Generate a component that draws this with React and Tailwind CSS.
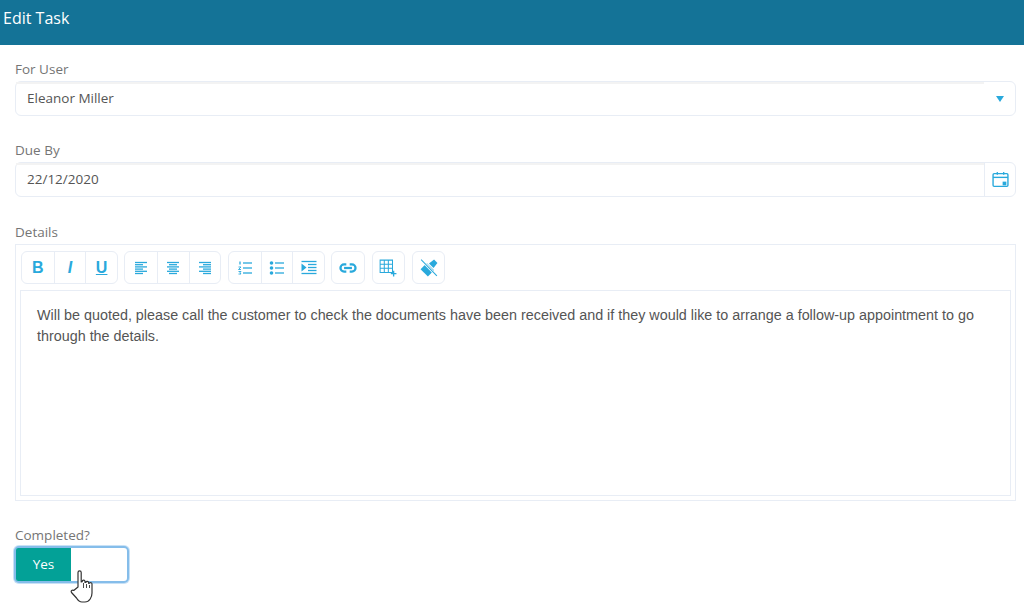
import React from 'react';

const ICON = '#29a9dc';

function Icon({ children, size = 16 }) {
  return (
    <svg width={size} height={size} viewBox="0 0 16 16" fill="none" stroke={ICON} strokeWidth="1.3">
      {children}
    </svg>
  );
}

function Lines({ rows }) {
  return (
    <Icon>
      {rows.map(([x1, x2], i) => (
        <line key={i} x1={x1} x2={x2} y1={2.5 + i * 2.2} y2={2.5 + i * 2.2} />
      ))}
    </Icon>
  );
}

const alignLeft = [[2, 14], [2, 10], [2, 14], [2, 10], [2, 14], [2, 10]];
const alignCenter = [[2, 14], [4, 12], [2, 14], [4, 12], [2, 14], [4, 12]];
const alignRight = [[2, 14], [6, 14], [2, 14], [6, 14], [2, 14], [6, 14]];

function ToolButton({ children, divider }) {
  return (
    <div className={`flex h-[31px] w-[31.670px] items-center justify-center ${divider ? 'border-l border-[#e8edf5]' : ''}`}>
      {children}
    </div>
  );
}

function ToolGroup({ items }) {
  return (
    <div className="flex rounded-md border border-[#e8edf5] bg-white">
      {items.map((item, i) => (
        <ToolButton key={i} divider={i > 0}>{item}</ToolButton>
      ))}
    </div>
  );
}

function Glyph({ className, children }) {
  return <span className={`text-[16px] leading-none text-[#29a9dc] ${className}`}>{children}</span>;
}

function Label({ children }) {
  return <label className="block h-[21px] text-[13.500px] leading-[20px] text-[#757575]">{children}</label>;
}

function Field({ children, side }) {
  return (
    <div className="mt-[1px] flex h-[35px] rounded-md border border-[#e8edf5] text-[13.500px] text-[#555]">
      <div className="flex flex-1 items-center border-t-2 border-[#f3f3f3] pb-[2px] pl-[11px]">{children}</div>
      {side}
    </div>
  );
}

export default function App() {
  return (
    <div className="relative h-[606px] w-[1024px] overflow-hidden bg-white font-['Open_Sans',sans-serif]">
      <header className="h-[45px] bg-[#147397] pl-[3px] pt-[7px] text-[16px] leading-[22px] text-white">
        Edit Task
      </header>

      <div className="pl-[15px] pr-2 pt-[14px]">
        <Label>For User</Label>
        <Field
          side={
            <div className="flex h-full w-[31px] items-center justify-center">
              <span className="h-0 w-0 border-x-[4.500px] border-t-[6px] border-x-transparent border-t-[#29a9dc]" />
            </div>
          }
        >
          Eleanor Miller
        </Field>

        <div className="mt-[24px]">
          <Label>Due By</Label>
          <Field
            side={
              <div className="flex h-full w-[31px] items-center justify-center border-l border-[#e8edf5]">
                <Icon size={17}>
                  <rect x="1" y="2.500" width="14" height="12" rx="1" />
                  <line x1="1" x2="15" y1="6" y2="6" />
                  <line x1="5" x2="5" y1="1" y2="3.500" />
                  <line x1="11" x2="11" y1="1" y2="3.500" />
                  <rect x="10" y="10" width="3.500" height="3.500" fill={ICON} stroke="none" />
                </Icon>
              </div>
            }
          >
            22/12/2020
          </Field>
        </div>

        <div className="mt-[25px]">
          <Label>Details</Label>
          <div className="mt-[1px] flex h-[257px] flex-col border border-[#e8edf5] px-1 pt-[6px] pb-1">
            <div className="flex gap-[6.500px] pl-[1px]">
              <ToolGroup
                items={[
                  <Glyph className="font-['Liberation_Sans',sans-serif] font-bold">B</Glyph>,
                  <Glyph className="font-['Liberation_Sans',sans-serif] font-bold italic">I</Glyph>,
                  <Glyph className="font-['Liberation_Sans',sans-serif] font-bold underline">U</Glyph>,
                ]}
              />
              <ToolGroup items={[<Lines rows={alignLeft} />, <Lines rows={alignCenter} />, <Lines rows={alignRight} />]} />
              <ToolGroup
                items={[
                  <Icon>
                    <line x1="6" x2="15" y1="3" y2="3" />
                    <line x1="6" x2="15" y1="8" y2="8" />
                    <line x1="6" x2="15" y1="13" y2="13" />
                    <line x1="3" x2="3" y1="1.500" y2="4.500" />
                    <path d="M1.500 7h2.500l-2.500 2.500h2.500" strokeWidth="0.9" />
                    <path d="M1.500 11.500h2.500l-1 1.200 1 1.300h-2.500" strokeWidth="0.9" />
                  </Icon>,
                  <Icon>
                    <line x1="6" x2="15" y1="3" y2="3" />
                    <line x1="6" x2="15" y1="8" y2="8" />
                    <line x1="6" x2="15" y1="13" y2="13" />
                    <circle cx="2.500" cy="3" r="1.800" fill={ICON} stroke="none" />
                    <circle cx="2.500" cy="8" r="1.800" fill={ICON} stroke="none" />
                    <circle cx="2.500" cy="13" r="1.800" fill={ICON} stroke="none" />
                  </Icon>,
                  <Icon>
                    <line x1="0.500" x2="15.500" y1="1.500" y2="1.500" />
                    <line x1="7" x2="15.500" y1="4.500" y2="4.500" />
                    <line x1="7" x2="15.500" y1="7.500" y2="7.500" />
                    <line x1="7" x2="15.500" y1="10.500" y2="10.500" />
                    <line x1="0.500" x2="15.500" y1="13.500" y2="13.500" />
                    <path d="M0.500 3.500l5 4-5 4z" fill={ICON} stroke="none" />
                  </Icon>,
                ]}
              />
              <ToolGroup
                items={[
                  <Icon size={18}>
                    <path d="M6.500 4.800H4.500a3.200 3.200 0 0 0 0 6.400h2M9.500 4.800h2a3.200 3.200 0 0 1 0 6.400h-2" strokeWidth="2" />
                    <line x1="4.500" x2="11.500" y1="8" y2="8" strokeWidth="2" />
                  </Icon>,
                ]}
              />
              <ToolGroup
                items={[
                  <Icon size={18}>
                    <path d="M1 1h11v11h-11zM1 4.700h11M1 8.300h11M4.700 1v11M8.300 1v11" strokeWidth="0.9" />
                    <path d="M13 10.500v5M10.500 13h5" strokeWidth="1.200" />
                  </Icon>,
                ]}
              />
              <ToolGroup
                items={[
                  <Icon size={18}>
                    <path d="M0.500 9L6 3.500l6.500 6.500L7 15.500z" fill={ICON} stroke="none" />
                    <path d="M8 4l4.500-3.500 3 3L12 8z" fill={ICON} stroke="none" />
                    <line x1="1" x2="15" y1="0.500" y2="15" stroke="#fff" strokeWidth="2.400" />
                    <line x1="1" x2="15" y1="0.500" y2="15" strokeWidth="0.900" />
                  </Icon>,
                ]}
              />
            </div>
            <div className="mt-[6px] flex-1 border border-[#e8edf5] px-4 pt-[14px] font-['Liberation_Sans',sans-serif] text-[14.350px] leading-[21px] text-[#555]">
              Will be quoted, please call the customer to check the documents have been received and if they would like to arrange a follow-up appointment to go through the details.
            </div>
          </div>
        </div>

        <div className="mt-[24px]">
          <Label>Completed?</Label>
          <div className="-ml-[1px] h-[37px] w-[115px] rounded-[5px] border-2 border-[#85bdea] bg-white shadow-[0_0_0_1px_rgba(133,189,234,0.45)]">
            <div className="flex h-full w-[55px] items-center justify-center rounded-l-[2px] bg-[#03a197] text-[13.500px] font-medium text-white">
              Yes
            </div>
          </div>
        </div>
      </div>

      {/* mouse pointer over the switch */}
      <svg className="absolute left-[70px] top-[569px]" width="26" height="36" viewBox="0 0 26 36" fill="#fff" stroke="#333" strokeWidth="1.200" strokeLinejoin="round">
        <path d="M8 18V3.500a1.600 1.600 0 0 1 3.200 0V13l1-.3v-.2a1.400 1.400 0 0 1 2.800 0v1l.9-.2a1.400 1.400 0 0 1 2.700.3v.7l.9-.1a1.400 1.400 0 0 1 2.500 1V24c0 4-2.500 9-7 9h-3c-3 0-4-1.500-5.500-4L1.500 23.500c-1-1.500.8-3 2.200-2z" />
        <path d="M13.500 14v5M16.500 15v4M19.500 16v3" fill="none" strokeWidth="0.900" />
      </svg>
    </div>
  );
}
